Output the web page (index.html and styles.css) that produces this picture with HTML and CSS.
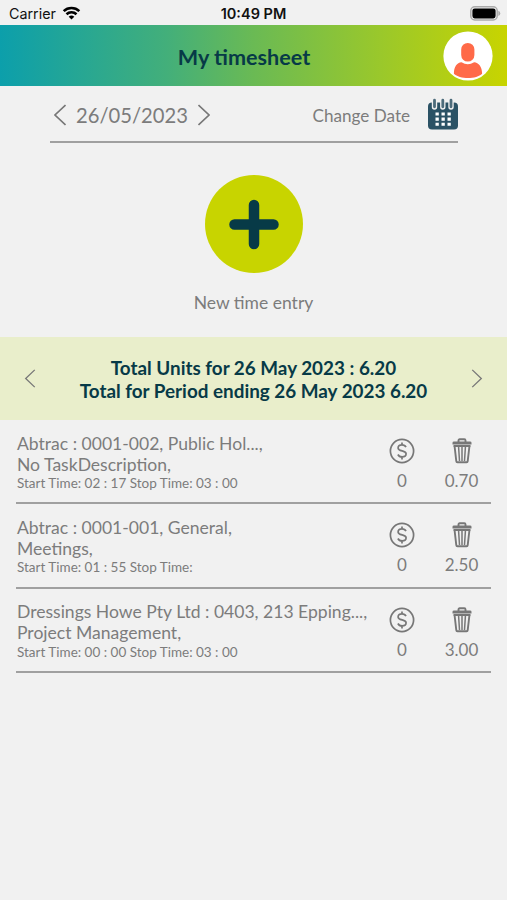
FILE: index.html
```html
<!DOCTYPE html>
<html lang="en">
<head>
<meta charset="utf-8">
<title>My timesheet</title>
<link rel="stylesheet" href="styles.css">
</head>
<body>
<svg class="symbols" width="0" height="0">
  <symbol id="prev" viewBox="0 0 12 22"><path d="M11.500 1 1 11 11.500 21"/></symbol>
  <symbol id="next" viewBox="0 0 12 22"><path d="M.5 1 11 11 .5 21"/></symbol>
  <symbol id="dollar" viewBox="0 0 26 26">
    <circle cx="13" cy="13" r="11.600"/>
    <path d="M17 9.200C16.200 7.600 14.800 6.900 13 6.900c-2.200 0-3.900 1.200-3.900 3 0 4 8 2.100 8 5.900 0 2-1.800 3.100-4 3.100-1.900 0-3.400-.8-4.200-2.400M13 4.500v2.400M13 18.900v2.600"/>
  </symbol>
  <symbol id="trash" viewBox="0 0 20 26">
    <path class="bin-line" d="M6.500 4V2.500Q6.500 1.300 7.700 1.300h4.600q1.200 0 1.200 1.200V4M2.600 8.500l1.700 14.700q.1 1 1.100 1h9.200q1 0 1.100-1L17.400 8.500"/>
    <path class="bin-rib" d="M6.600 9l.9 14M10 9v14M13.400 9l-.9 14"/>
    <path class="bin-lid" d="M2 3.500h16q1.500 0 1.500 1.300V6.500H.5V4.800q0-1.300 1.500-1.300zM1.500 7.100h17v2h-17z"/>
  </symbol>
</svg>

<div class="status">
  <div class="carrier">Carrier
    <svg class="wifi" viewBox="0 0 18 14"><path d="M1.200 5.100a11.300 11.300 0 0 1 15.600 0M4 8.200a7.300 7.300 0 0 1 10 0"/><path class="dot" d="M9 13.500 6.200 10.700a4.100 4.100 0 0 1 5.600 0z"/></svg>
  </div>
  <div class="clock">10:49 PM</div>
  <svg class="battery" viewBox="0 0 31 15"><rect class="shell" x=".8" y=".8" width="26.400" height="13.200" rx="4"/><rect x="2.400" y="2.400" width="23.200" height="10" rx="2.300"/><path class="tip" d="M28.300 4.700q2 .8 2 2.700t-2 2.700z"/></svg>
</div>

<header class="header">
  <h1>My timesheet</h1>
  <svg class="avatar" viewBox="0 0 50 50"><circle cx="25" cy="25" r="24.600" fill="#fff"/><path fill="#ff6a48" d="M18.200 18.500a6.600 6.600 0 0 1 13.200 0v5.500a6.600 6.600 0 0 1-13.200 0zM18.500 31.300q6.300 3.700 12.600 0c4.600.3 8 4.700 8 11.400-5.500 5.700-22.500 5.700-28.200 0 0-6.700 3-11.100 7.600-11.400z"/></svg>
</header>

<section class="datebar">
  <svg class="chev"><use href="#prev"/></svg>
  <span class="date">26/05/2023</span>
  <svg class="chev"><use href="#next"/></svg>
  <span class="change">Change Date</span>
  <svg class="calendar" viewBox="0 0 30 32">
    <rect y="4.500" width="30" height="27" rx="4" fill="#2b5265"/>
    <path d="M6.500 3v6M14.800 3v6M23 3v6" stroke="#f1f1f1" stroke-width="5.400" stroke-linecap="round"/>
    <path d="M6.500 2.200v6.600M14.800 2.200v6.600M23 2.200v6.600" stroke="#4d6c7b" stroke-width="2.800" stroke-linecap="round"/>
    <path d="M7.500 16h3.300m2.700 0h3.300m2.700 0h3.300M7.500 21.100h3.300m2.700 0h3.300m2.700 0h3.300M7.500 26.200h3.300m2.700 0h3.300m2.700 0h3.300" stroke="#fff" stroke-width="3.100"/>
  </svg>
</section>

<section class="new-entry">
  <svg class="add" viewBox="0 0 98 98"><circle cx="49" cy="49" r="49" fill="#c8d400"/><path d="M49 30v39M29.500 49.500h39" stroke="#073a47" stroke-width="10.500" stroke-linecap="round"/></svg>
  <span class="new-label">New time entry</span>
</section>

<section class="totals">
  <svg class="chev small"><use href="#prev"/></svg>
  <div class="sums"><div>Total Units for 26 May 2023 : 6.20</div><div>Total for Period ending 26 May 2023 6.20</div></div>
  <svg class="chev small"><use href="#next"/></svg>
</section>

<main class="entries">
  <article class="entry">
    <div class="info"><div>Abtrac : 0001-002, Public Hol...,</div><div>No TaskDescription,</div><div class="times">Start Time: 02 : 17 Stop Time: 03 : 00</div></div>
    <div class="cell"><svg class="dollar"><use href="#dollar"/></svg><span>0</span></div>
    <div class="cell units"><svg class="trash"><use href="#trash"/></svg><span>0.70</span></div>
  </article>
  <article class="entry">
    <div class="info"><div>Abtrac : 0001-001, General,</div><div>Meetings,</div><div class="times">Start Time: 01 : 55 Stop Time:</div></div>
    <div class="cell"><svg class="dollar"><use href="#dollar"/></svg><span>0</span></div>
    <div class="cell units"><svg class="trash"><use href="#trash"/></svg><span>2.50</span></div>
  </article>
  <article class="entry">
    <div class="info"><div>Dressings Howe Pty Ltd : 0403, 213 Epping...,</div><div>Project Management,</div><div class="times">Start Time: 00 : 00 Stop Time: 03 : 00</div></div>
    <div class="cell"><svg class="dollar"><use href="#dollar"/></svg><span>0</span></div>
    <div class="cell units"><svg class="trash"><use href="#trash"/></svg><span>3.00</span></div>
  </article>
</main>
</body>
</html>
```
FILE: styles.css
```css
* { box-sizing: border-box; }
body {
  margin: 0;
  min-height: 900px;
  background: #f1f1f1;
  color: #7c7c7c;
  font-family: Lato, "Liberation Sans", sans-serif;
  white-space: nowrap;
}
svg { display: block; fill: none; flex: none; }
.symbols { position: absolute; }
.status {
  display: grid;
  grid-template-columns: 1fr auto 1fr;
  align-items: center;
  height: 25px;
  padding: 3px 6px 0 9px;
  color: #111;
  font: 14.300px/20px Inter, "Liberation Sans", sans-serif;
}
.carrier { display: flex; gap: 6px; }
.wifi { width: 19px; height: 14px; margin-top: 2px; stroke: #000; stroke-width: 2.600; }
.wifi .dot { fill: #000; stroke: none; }
.clock { margin-right: 3px; font-weight: 600; font-size: 14.500px; }
.battery { justify-self: end; width: 31px; height: 15px; margin-top: -2px; fill: #000; }
.battery .shell { fill: #f1f1f1; stroke: #aaa; stroke-width: 1.500; }
.battery .tip { fill: #aaa; }
.header {
  display: grid;
  grid-template-columns: 45px 1fr 64px;
  align-items: center;
  height: 61px;
  background: linear-gradient(90deg, #0c9fab 0%, #43af7a 33%, #6aba54 50%, #9ac82b 75%, #c8d400 100%);
}
.header h1 {
  grid-column: 2;
  margin: 2px 0 0;
  color: #073a47;
  font-size: 21.600px;
  line-height: 28px;
  font-weight: 700;
  text-align: center;
}
.avatar { width: 50px; height: 50px; }
.datebar {
  display: flex;
  align-items: center;
  height: 57px;
  margin: 0 49px 0 50px;
  padding: 2px 0 0 4px;
  border-bottom: 2px solid #a0a0a0;
}
.chev { width: 12px; height: 22px; stroke: #777; stroke-width: 1.600; }
.date { margin: 1px 10px 0; font-size: 20.200px; }
.change { margin: 1px 18px 0 auto; font-size: 17.100px; }
.calendar { width: 30px; height: 32px; margin-top: -2px; }
.new-entry { display: flex; flex-direction: column; align-items: center; height: 194px; padding-top: 32px; }
.add { width: 98px; height: 98px; }
.new-label { margin-top: 18px; font-size: 17.500px; line-height: 24px; }
.totals {
  display: flex;
  align-items: center;
  justify-content: space-between;
  height: 83px;
  padding: 0 24px;
  background: #e9eecb;
}
.chev.small { height: 19px; stroke-width: 1.500; }
.sums { color: #073a47; font-size: 18.850px; line-height: 23px; font-weight: 700; text-align: center; }
.entries { padding: 0 16px; }
.entry { display: flex; height: 84.300px; border-bottom: 2px solid #a0a0a0; padding-top: 12.600px; }
.info { flex: 1; min-width: 0; padding-left: 1px; font-size: 17.560px; line-height: 21.200px; }
.times { font-size: 13.500px; line-height: 16px; }
.cell { display: flex; flex-direction: column; align-items: center; width: 60px; padding-top: 5.400px; font-size: 17px; line-height: 22px; }
.cell + .cell { width: 59px; }
.cell span { margin-top: 6px; }
.dollar { width: 26px; height: 26px; stroke: #777; stroke-width: 1.700; }
.trash { width: 20px; height: 26px; }
.bin-line { stroke: #777; stroke-width: 1.900; }
.bin-rib { stroke: #777; stroke-width: 1.500; }
.bin-lid { fill: #777; }
```
